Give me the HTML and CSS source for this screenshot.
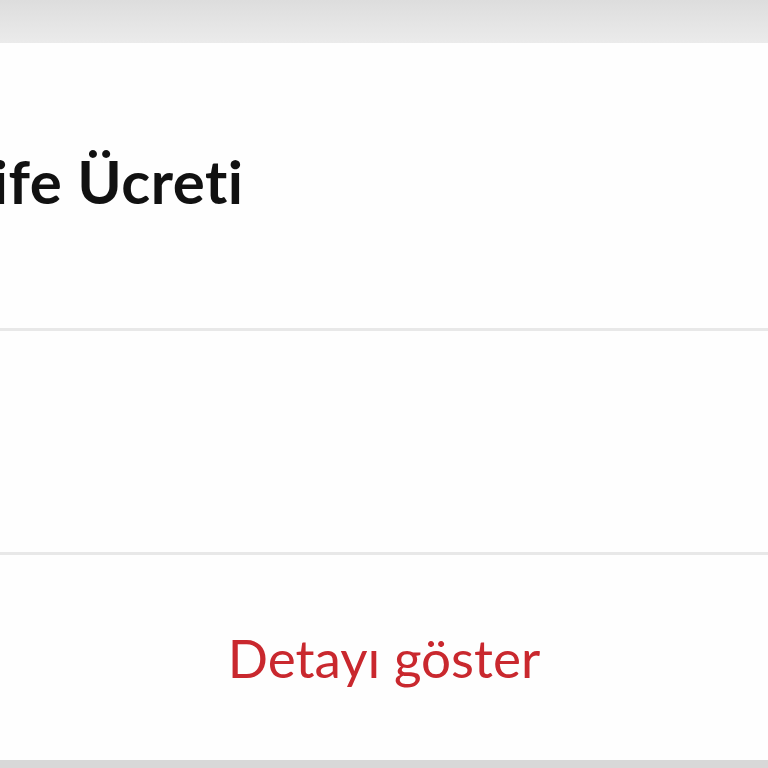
FILE: index.html
```html
<!DOCTYPE html>
<html lang="tr">
<head>
<meta charset="utf-8">
<link rel="stylesheet" href="styles.css">
</head>
<body>
<div class="page">
  <div class="topbar"></div>
  <div class="card">
    <div class="section title-row"><span class="title">Tarife Ücreti</span></div>
    <div class="divider"></div>
    <div class="section empty-row"></div>
    <div class="divider"></div>
    <div class="section link-row"><span class="link">Detayı göster</span></div>
  </div>
  <div class="bottombar"></div>
</div>
</body>
</html>
```
FILE: styles.css
```css
html, body { margin: 0; padding: 0; }
body { width: 768px; height: 768px; overflow: hidden; background: #d9d9d9; font-family: Lato, "Open Sans", sans-serif; font-variant-ligatures: none; }
.page { display: flex; flex-direction: column; height: 768px; }
.topbar { height: 43px; background: linear-gradient(to bottom, #dddddd, #ebebeb); flex: none; }
.card { background: #fefefe; height: 717px; display: flex; flex-direction: column; flex: none; }
.divider { height: 3px; background: #e8e8e8; flex: none; }
.section { display: flex; align-items: center; overflow: hidden; }
.title-row { height: 285px; padding-bottom: 10px; box-sizing: border-box; }
.empty-row { height: 221px; }
.link-row { height: 205px; justify-content: center; }
.title { font-weight: 700; font-size: 60px; color: #111; white-space: nowrap; margin-left: -91px; letter-spacing: 0.5px; }
.link { font-size: 53px; color: #c9282e; }
.bottombar { flex: 1; background: #d8d8d8; }
```
